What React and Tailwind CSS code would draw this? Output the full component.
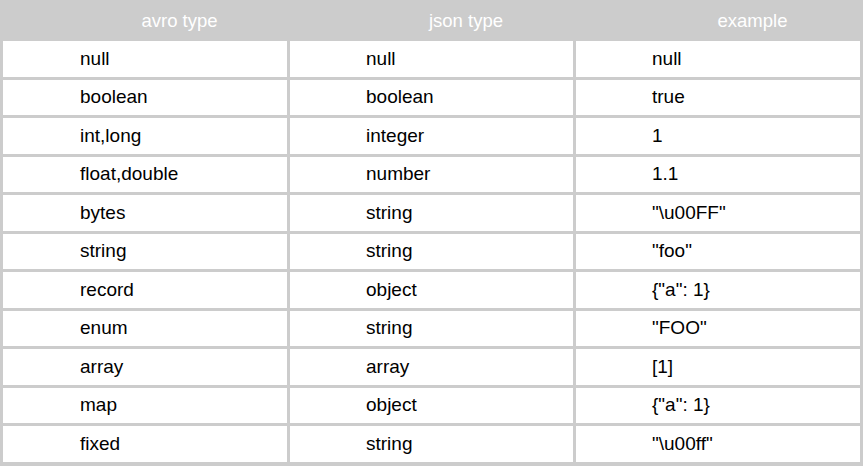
import React from "react";

const rows = [
  ["null", "null", "null"],
  ["boolean", "boolean", "true"],
  ["int,long", "integer", "1"],
  ["float,double", "number", "1.1"],
  ["bytes", "string", '"\\u00FF"'],
  ["string", "string", '"foo"'],
  ["record", "object", '{"a": 1}'],
  ["enum", "string", '"FOO"'],
  ["array", "array", "[1]"],
  ["map", "object", '{"a": 1}'],
  ["fixed", "string", '"\\u00ff"'],
];

const headers = ["avro type", "json type", "example"];

const App = () => {
  return (
    <section className="w-[863px] h-[466px] bg-[#cccccc] font-['Liberation_Sans',Arial,sans-serif]">
      {/* type table */}
      <div className="grid grid-cols-[284px_283px_284px] gap-[3px] p-[3px]">
        {headers.map((h) => (
          <div
            key={h}
            className="h-[35px] flex items-center justify-center pl-[69px] text-white text-[18.5px]"
          >
            {h}
          </div>
        ))}
        {rows.map((row, i) =>
          row.map((cell, j) => (
            <div
              key={i + "-" + j}
              className={`h-[35.5px] flex items-center bg-white text-[19px] text-black ${
                j === 0 ? "pl-[77px]" : "pl-[76px]"
              }`}
            >
              {cell}
            </div>
          ))
        )}
      </div>
    </section>
  );
};

export default App;
